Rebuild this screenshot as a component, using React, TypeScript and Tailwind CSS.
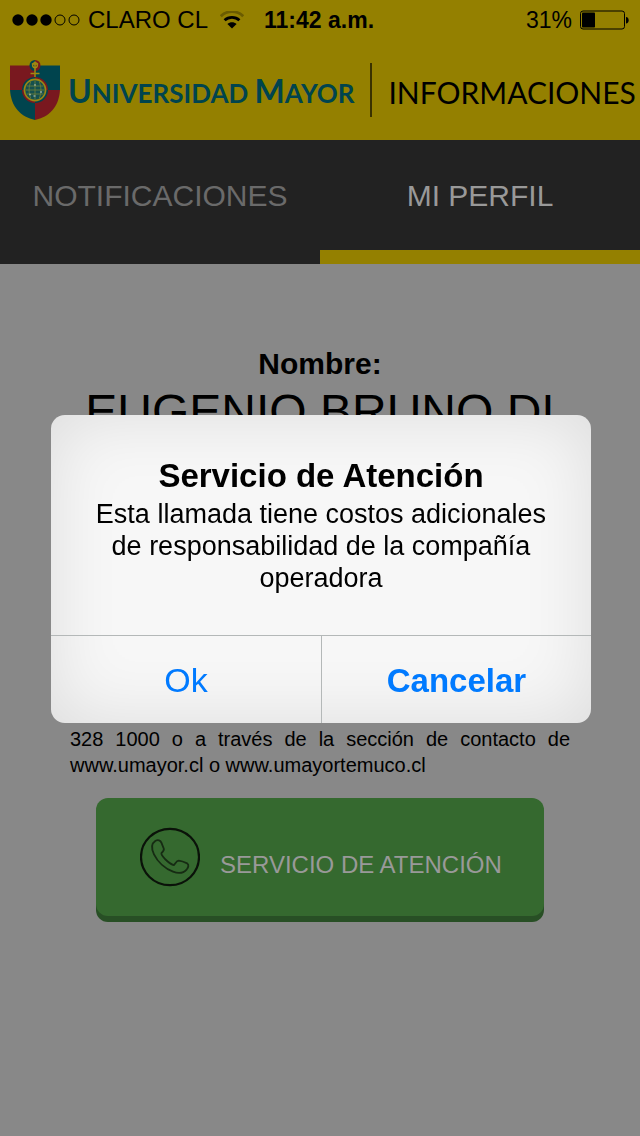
import { useState } from 'react'

const TABS = [
  { id: 'notificaciones', label: 'NOTIFICACIONES' },
  { id: 'perfil', label: 'MI PERFIL' },
]

function SignalDots() {
  return (
    <svg className="h-5 w-[68px]" viewBox="0 0 68 20" aria-hidden="true">
      <circle cx="6" cy="10" r="5.7" />
      <circle cx="20" cy="10" r="5.7" />
      <circle cx="34" cy="10" r="5.7" />
      <circle cx="48" cy="10" r="5" fill="none" stroke="black" />
      <circle cx="62" cy="10" r="5" fill="none" stroke="black" />
    </svg>
  )
}

function WifiIcon() {
  return (
    <svg className="h-[18px] w-6" viewBox="0 0 24 18" fill="none" aria-hidden="true">
      <path d="M0.8 5.2C7 -0.9 17 -0.9 23.2 5.2" stroke="#6b5c00" strokeWidth="2.8" />
      <path d="M4.6 9.2C8.7 5.3 15.3 5.3 19.4 9.2" stroke="black" strokeWidth="2.8" />
      <path d="M12 17.6L7.4 12.9C10 10.7 14 10.7 16.6 12.9Z" fill="black" />
    </svg>
  )
}

function BatteryIcon() {
  return (
    <svg className="h-5 w-[49px]" viewBox="0 0 49 20" aria-hidden="true">
      <rect x="0.5" y="1" width="44" height="18" rx="2.5" fill="none" stroke="black" />
      <rect x="2" y="2.5" width="13" height="15" rx="0.8" />
      <path d="M46 7C49.6 7 49.6 13.6 46 13.6Z" />
    </svg>
  )
}

function Shield() {
  return (
    <svg className="h-[60px] w-[50px] shrink-0" viewBox="0 0 50 60" fill="none" aria-hidden="true">
      <path d="M0 5.5H25V30H0Z" fill="#79181f" />
      <path d="M25 5.5H50V30H25Z" fill="#00444e" />
      <path d="M0 30H25V60C11 57 1 47 0 30Z" fill="#00444e" />
      <path d="M50 30H25V60C39 57 49 47 50 30Z" fill="#79181f" />
      <path d="M25 0A5.5 5.5 0 0 0 25 11Z" fill="#00444e" />
      <path d="M25 0A5.5 5.5 0 0 1 25 11Z" fill="#79181f" />
      <path d="M25 17A13 13 0 0 0 12 30H25Z" fill="#00444e" />
      <path d="M25 17A13 13 0 0 1 38 30H25Z" fill="#79181f" />
      <path d="M12 30A13 13 0 0 0 25 43V30Z" fill="#79181f" />
      <path d="M38 30A13 13 0 0 1 25 43V30Z" fill="#00444e" />
      <circle cx="25" cy="5.2" r="2.4" stroke="#a08a10" strokeWidth="1.4" />
      <path d="M25 1.5V17M21.8 4H28.2M20.5 13.5H29.5" stroke="#a08a10" strokeWidth="1.5" />
      <circle cx="25" cy="30" r="10.6" fill="#15504f" stroke="#9a8614" strokeWidth="1.6" />
      <path
        d="M16.5 26H33.5M15.5 30H34.5M16.5 34H33.5M25 20.5V39.5M20.8 21.5C18.5 27 18.5 33 20.8 38.5M29.2 21.5C31.5 27 31.5 33 29.2 38.5"
        stroke="#718039"
        strokeWidth="0.8"
      />
      <path d="M19 34.5H21M30 32H32M23.5 36H25.5M24 25H26" stroke="#8aa79a" strokeWidth="1.6" />
    </svg>
  )
}

function PhoneIcon() {
  return (
    <svg className="h-[60px] w-[60px] shrink-0" viewBox="0 0 60 60" fill="none" aria-hidden="true">
      <ellipse cx="30" cy="30" rx="29" ry="28.2" stroke="#0a1209" strokeWidth="2.2" />
      <path
        d="M15.5 13.7C18 12.6 20.4 13.2 21.5 15.8L23.8 21.7C24.3 23.2 23.4 24.2 21.6 25.8C20.5 27 24.2 31.5 27.4 34.3C30 36.5 32.6 38 34 38C35.8 36 36.4 33.6 38.8 33.7C41.5 34 44.6 35.2 47.2 36.4C49.3 37.8 48.2 40.6 46.8 42.3C43.5 46.1 38.5 46.7 33 44.6C25 41.5 17.5 34.5 14 27.3C11.3 21.7 11.2 16.6 15.5 13.7Z"
        stroke="#162b13"
        strokeWidth="1.8"
      />
    </svg>
  )
}

export default function App() {
  const [active, setActive] = useState('perfil')
  const [open, setOpen] = useState(true)

  return (
    <div className="min-h-screen bg-[#888888] font-['Liberation_Sans',Arial,sans-serif] text-black">
      <header className="bg-[#948000]">
        <div className="flex h-10 items-center pr-[11px] pl-3">
          <SignalDots />
          <span className="ml-2 text-[24px] leading-10">CLARO CL</span>
          <span className="ml-3">
            <WifiIcon />
          </span>
          <span className="ml-5 text-[23px] leading-10 font-bold">11:42 a.m.</span>
          <span className="ml-auto text-[23px] leading-10">31%</span>
          <span className="ml-2">
            <BatteryIcon />
          </span>
        </div>

        <div className="flex h-25 items-center pl-2.5">
          <Shield />
          <h1 className="ml-2 pt-1 font-[Lato,sans-serif] text-[26px] leading-10 font-bold whitespace-nowrap text-[#00444e]">
            <span className="text-[32px]">U</span>NIVERSIDAD <span className="text-[32px]">M</span>AYOR
          </h1>
          <span className="ml-4 h-[54px] w-0.5 shrink-0 bg-[#3a3200]" />
          <span className="ml-4 pt-1 font-[Lato,sans-serif] text-[30px] leading-10 whitespace-nowrap">INFORMACIONES</span>
        </div>
      </header>

      <nav className="grid grid-cols-2 bg-[#222222]">
        {TABS.map((tab) => (
          <button
            key={tab.id}
            type="button"
            onClick={() => setActive(tab.id)}
            className={`h-31 border-b-14 text-[30px] ${
              active === tab.id ? 'border-[#948000] text-[#999999]' : 'border-[#222222] text-[#6a6a6a]'
            }`}
          >
            {tab.label}
          </button>
        ))}
      </nav>

      <main className="px-[70px] pt-20 pb-10">
        <h2 className="text-center text-[30px] leading-10 font-bold">Nombre:</h2>
        <p className="text-center text-[48px] leading-14">EUGENIO BRUNO DI</p>

        <p className="mt-[286px] text-justify text-[20px] leading-[26px]">
          328 1000 o a través de la sección de contacto de www.umayor.cl o www.umayortemuco.cl
        </p>

        <div className="mt-5 px-[26px]">
          <button
            type="button"
            onClick={() => setOpen(true)}
            className="flex h-[118px] w-full items-center rounded-xl bg-[#35692f] pl-11 text-[24px] text-[#999999] shadow-[0_6px_0_#284f25]"
          >
            <PhoneIcon />
            <span className="ml-5 pt-4 whitespace-nowrap">SERVICIO DE ATENCIÓN</span>
          </button>
        </div>
      </main>

      {open && (
        <div className="fixed inset-0 flex items-center justify-center pt-0.5 pl-0.5">
          <div
            role="alertdialog"
            aria-labelledby="alert-title"
            aria-describedby="alert-message"
            className="w-[540px] overflow-hidden rounded-[14px] bg-[#f7f7f7] text-center shadow-[inset_0_0_70px_rgba(0,0,0,0.11)]"
          >
            <div className="px-10 pt-[39px] pb-[41px]">
              <h2 id="alert-title" className="text-[33px] leading-11 font-bold">
                Servicio de Atención
              </h2>
              <p id="alert-message" className="text-[27px] leading-8">
                Esta llamada tiene costos adicionales de responsabilidad de la compañía operadora
              </p>
            </div>
            <div className="grid grid-cols-2 border-t border-[#b4b8b8] text-[#007aff]">
              <button type="button" onClick={() => setOpen(false)} className="h-[87px] pt-0.5 text-[34px]">
                Ok
              </button>
              <button
                type="button"
                onClick={() => setOpen(false)}
                className="h-[87px] border-l border-[#b4b8b8] pt-0.5 text-[33px] font-bold"
              >
                Cancelar
              </button>
            </div>
          </div>
        </div>
      )}
    </div>
  )
}
